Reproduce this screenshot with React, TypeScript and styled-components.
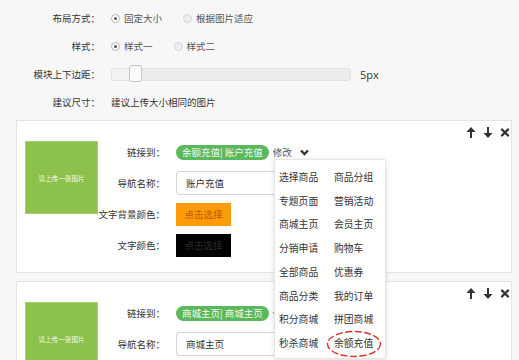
import React from "react";
import styled, { createGlobalStyle } from "styled-components";

const GlobalStyle = createGlobalStyle`
  html, body { margin: 0; padding: 0; }
  body {
    background: #f7f7f8;
    font-family: "Noto Sans CJK SC", "Noto Sans", sans-serif;
    color: #333;
    overflow: hidden;
    width: 519px;
    height: 360px;
  }
`;

const Page = styled.div`
  padding-top: 4px;
`;

const Settings = styled.div`
  display: flex;
  flex-direction: column;
`;

const SettingRow = styled.div`
  display: grid;
  grid-template-columns: 100px 1fr;
  column-gap: 11px;
  height: 28px;
  align-items: center;
  font-size: 9.5px;
`;

const Label = styled.div`
  text-align: right;
  color: #333;
  white-space: nowrap;
`;

const RadioGroup = styled.div`
  display: flex;
  gap: 21px;
`;

const RadioOption = styled.label`
  display: flex;
  align-items: center;
  gap: 4px;
  color: #555;
`;

const RadioDot = styled.span<{ $checked?: boolean }>`
  width: 7px;
  height: 7px;
  border-radius: 50%;
  border: 1px solid ${(p) => (p.$checked ? "#b5b5b5" : "#d6d6d6")};
  background: ${(p) => (p.$checked ? "#fff" : "#eeeeee")};
  display: flex;
  align-items: center;
  justify-content: center;
  &::after {
    content: "";
    width: 3px;
    height: 3px;
    border-radius: 50%;
    background: ${(p) => (p.$checked ? "#555" : "transparent")};
  }
`;

const SliderWrap = styled.div`
  display: flex;
  align-items: center;
  gap: 9px;
`;

const Track = styled.div`
  position: relative;
  width: 238px;
  height: 11px;
  border: 1px solid #e2e2e2;
  border-radius: 3px;
  background: #ececec;
`;

const TrackFill = styled.div`
  height: 100%;
  background: #f2f2f2;
  border-radius: 3px 0 0 3px;
`;

const Handle = styled.div`
  position: absolute;
  top: -4px;
  width: 13px;
  height: 17px;
  box-sizing: border-box;
  border: 1px solid #c4c4c4;
  border-radius: 3px;
  background: #fafafa;
`;

const SliderValue = styled.span`
  font-family: "Open Sans", "Liberation Sans", sans-serif;
  font-size: 11px;
  color: #333;
`;

const CardList = styled.div`
  display: flex;
  flex-direction: column;
  gap: 8px;
  margin: 4px 7px 0 16px;
`;

const Card = styled.div`
  position: relative;
  background: #fff;
  border: 1px solid #e4e4e4;
  padding: 5px 1px 15px 8px;
`;

const CardTools = styled.div`
  display: flex;
  justify-content: flex-end;
  align-items: center;
  gap: 7px;
  height: 12px;
  margin-bottom: 2px;
`;

const ToolIcon = styled.svg`
  width: 10px;
  height: 11px;
  display: block;
`;

const CardBody = styled.div`
  display: flex;
  align-items: flex-start;
`;

const ImageBox = styled.div`
  width: 73px;
  height: 73px;
  margin-top: 1px;
  box-sizing: border-box;
  border: 1px solid #a7d06a;
  background: #8cc14b;
  color: #f4f9ec;
  font-size: 6.6px;
  display: flex;
  align-items: center;
  justify-content: center;
  flex-shrink: 0;
`;

const FormGrid = styled.div`
  display: grid;
  grid-template-columns: 67px 1fr;
  grid-auto-rows: 24px;
  column-gap: 11px;
  row-gap: 7px;
  align-items: center;
  font-size: 9.5px;
`;

const ValueCell = styled.div`
  position: relative;
  display: flex;
  align-items: center;
  height: 100%;
`;

const LinkTag = styled.span`
  display: inline-flex;
  align-items: center;
  height: 15px;
  padding: 0 6px;
  border-radius: 8px;
  background: #5cb85c;
  color: #f1faee;
  white-space: nowrap;
`;

const EditLink = styled.span`
  margin-left: 4px;
  color: #555;
  display: inline-flex;
  align-items: center;
  gap: 8px;
`;

const Chevron = styled.svg`
  width: 9px;
  height: 7px;
  display: block;
`;

const TextInput = styled.div`
  width: 180px;
  height: 24px;
  box-sizing: border-box;
  border: 1px solid #d4d4d4;
  border-radius: 3px;
  background: #fff;
  padding-left: 9px;
  display: flex;
  align-items: center;
  color: #333;
`;

const ColorButton = styled.div<{ $bg: string; $fg: string }>`
  width: 55px;
  height: 23px;
  background: ${(p) => p.$bg};
  color: ${(p) => p.$fg};
  display: flex;
  align-items: center;
  justify-content: center;
`;

const Dropdown = styled.div`
  position: absolute;
  left: 98px;
  top: 19px;
  z-index: 10;
  width: 112px;
  box-sizing: border-box;
  padding: 5px 0 3px 4px;
  background: #fff;
  border: 1px solid #e6e6e6;
  border-radius: 2px;
  box-shadow: 0 1px 4px rgba(0, 0, 0, 0.15);
  display: grid;
  grid-template-columns: 55px 52px;
  grid-auto-rows: 23.75px;
  align-items: center;
  font-size: 9.8px;
  color: #333;
`;

const DropItem = styled.div`
  white-space: nowrap;
`;

const Highlight = styled.svg`
  position: absolute;
  left: 51px;
  top: 170px;
  width: 56px;
  height: 28px;
  pointer-events: none;
`;

const UpIcon = () => (
  <ToolIcon viewBox="0 0 10 11">
    <polygon points="5,0 9.5,5 6,5 6,11 4,11 4,5 0.5,5" fill="#333" />
  </ToolIcon>
);
const DownIcon = () => (
  <ToolIcon viewBox="0 0 10 11">
    <polygon points="5,11 9.5,6 6,6 6,0 4,0 4,6 0.5,6" fill="#333" />
  </ToolIcon>
);
const CloseIcon = () => (
  <ToolIcon viewBox="0 0 10 11">
    <path d="M2 2.5 L8 8.5 M8 2.5 L2 8.5" stroke="#333" strokeWidth="2.4" strokeLinecap="round" />
  </ToolIcon>
);

const menuItems = [
  "选择商品", "商品分组",
  "专题页面", "营销活动",
  "商城主页", "会员主页",
  "分销申请", "购物车",
  "全部商品", "优惠券",
  "商品分类", "我的订单",
  "积分商城", "拼团商城",
  "秒杀商城", "余额充值",
];

type CardProps = {
  tag: string;
  name: string;
  withMenu?: boolean;
};

const NavCard: React.FC<CardProps> = ({ tag, name, withMenu }) => (
  <Card>
    <CardTools>
      <UpIcon />
      <DownIcon />
      <CloseIcon />
    </CardTools>
    <CardBody>
      <ImageBox>请上传一张图片</ImageBox>
      <FormGrid>
        <Label>链接到：</Label>
        <ValueCell>
          <LinkTag>{tag}</LinkTag>
          <EditLink>
            修改
            <Chevron viewBox="0 0 9 7">
              <polyline points="1,1.5 4.5,5 8,1.5" fill="none" stroke="#333" strokeWidth="2.4" />
            </Chevron>
          </EditLink>
          {withMenu && (
            <Dropdown>
              {menuItems.map((m) => (
                <DropItem key={m}>{m}</DropItem>
              ))}
              <Highlight viewBox="0 0 56 28">
                <ellipse
                  cx="28"
                  cy="14"
                  rx="26.5"
                  ry="12.5"
                  fill="none"
                  stroke="#d8322c"
                  strokeWidth="1.4"
                  strokeDasharray="7 2.5"
                />
              </Highlight>
            </Dropdown>
          )}
        </ValueCell>
        <Label>导航名称：</Label>
        <ValueCell>
          <TextInput>{name}</TextInput>
        </ValueCell>
        <Label>文字背景颜色：</Label>
        <ValueCell>
          <ColorButton $bg="#ff9a0a" $fg="#b55a00">点击选择</ColorButton>
        </ValueCell>
        <Label>文字颜色：</Label>
        <ValueCell>
          <ColorButton $bg="#000" $fg="#2e2e2e">点击选择</ColorButton>
        </ValueCell>
      </FormGrid>
    </CardBody>
  </Card>
);

export default function App() {
  return (
    <Page>
      <GlobalStyle />
      <Settings>
        <SettingRow>
          <Label>布局方式：</Label>
          <RadioGroup>
            <RadioOption><RadioDot $checked />固定大小</RadioOption>
            <RadioOption><RadioDot />根据图片适应</RadioOption>
          </RadioGroup>
        </SettingRow>
        <SettingRow>
          <Label>样式：</Label>
          <RadioGroup>
            <RadioOption><RadioDot $checked />样式一</RadioOption>
            <RadioOption><RadioDot />样式二</RadioOption>
          </RadioGroup>
        </SettingRow>
        <SettingRow>
          <Label>模块上下边距：</Label>
          <SliderWrap>
            <Track>
              <TrackFill style={{ width: "18px" }} />
              <Handle style={{ left: "17px" }} />
            </Track>
            <SliderValue>5px</SliderValue>
          </SliderWrap>
        </SettingRow>
        <SettingRow>
          <Label>建议尺寸：</Label>
          <span>建议上传大小相同的图片</span>
        </SettingRow>
      </Settings>
      <CardList>
        <NavCard tag="余额充值| 账户充值" name="账户充值" withMenu />
        <NavCard tag="商城主页| 商城主页" name="商城主页" />
      </CardList>
    </Page>
  );
}
